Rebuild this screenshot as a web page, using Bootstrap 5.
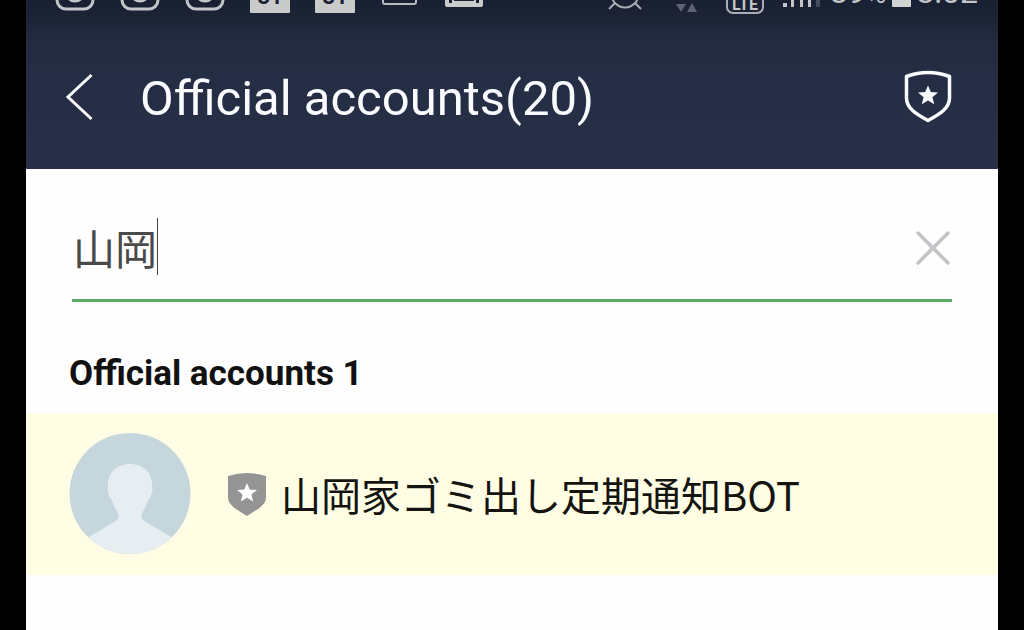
<!DOCTYPE html>
<html lang="en">
<head>
<meta charset="utf-8">
<meta name="viewport" content="width=device-width, initial-scale=1">
<title>Official accounts</title>
<link href="https://cdn.jsdelivr.net/npm/bootstrap@5.3.0/dist/css/bootstrap.min.css" rel="stylesheet">
<script src="https://cdn.jsdelivr.net/npm/bootstrap@5.3.0/dist/js/bootstrap.bundle.min.js" defer></script>
<style>
body { background: #000; font-family: Roboto, "Noto Sans CJK JP", sans-serif; overflow: hidden; }
.screen { margin: 0 26px; background: #fefefe; }
.app-top { background: linear-gradient(#1a2033 0, #1d2436 20px, #222a3e 36px, #252d44 70px, #283049 169px); }
.status { height: 24px; padding: 0 20px 0 29px; color: #c3c5c8; overflow: hidden; }
.status-icons { gap: 25px; }
.status svg { height: 40px; display: block; flex: none; }
.status-text { font-size: 32px; line-height: 32px; }
.status-text small { font-size: 28px; line-height: 1; }
.titlebar { height: 145px; padding: 0 46px 0 38px; color: #fafbff; }
.titlebar h1 { font-size: 49px; line-height: 56px; font-weight: 400; padding: 4px 0 0 46px; }
.icon-btn { padding: 0; border: 0; color: inherit; line-height: 0; }
.search { margin: 0 46px; padding: 34px 0 8px; border-bottom: 3px solid #5aa968; height: 133px; }
.search input { font-family: "Noto Sans CJK JP", sans-serif; font-size: 42px; line-height: 60px; padding: 0 1px; height: 60px; }
.search input, .search input:focus { background: transparent; box-shadow: none; color: #4a4a4a; }
.caret { left: 85px; top: 1px; width: 1px; height: 57px; background: #444; }
.section-title { font-size: 35px; line-height: 44px; font-weight: 700; color: #111; padding: 50px 43px 17px; margin: 0; }
.account { background: #fffee5; padding: 20px 43px 21px; color: #141410; }
.account-name { font-size: 40px; line-height: 60px; font-family: "Noto Sans CJK JP", sans-serif; }
</style>
</head>
<body>
<div class="screen min-vh-100">
  <header class="app-top">
    <div class="status d-flex justify-content-between align-items-end">
      <div class="status-icons d-flex">
        <svg width="40" viewBox="0 -16 40 40" fill="none" stroke="#c3c5c8" stroke-width="3"><rect x="2" y="-25" width="36" height="34" rx="9"/><circle cx="20" cy="-8" r="9"/></svg>
        <svg width="40" viewBox="0 -16 40 40" fill="none" stroke="#c3c5c8" stroke-width="3"><rect x="2" y="-25" width="36" height="34" rx="9"/><circle cx="20" cy="-8" r="9"/></svg>
        <svg width="40" viewBox="0 -16 40 40" fill="none" stroke="#c3c5c8" stroke-width="3"><rect x="2" y="-25" width="36" height="34" rx="9"/><circle cx="20" cy="-8" r="9"/></svg>
        <svg width="40" viewBox="0 -16 40 40"><rect y="-25" width="40" height="38" rx="1" fill="#c9caca"/><text x="20" y="4" text-anchor="middle" font-size="22" font-weight="700" fill="#1b2134">31</text></svg>
        <svg width="40" viewBox="0 -16 40 40"><rect y="-25" width="40" height="38" rx="1" fill="#c9caca"/><text x="20" y="4" text-anchor="middle" font-size="22" font-weight="700" fill="#1b2134">31</text></svg>
        <svg width="40" viewBox="0 -16 40 40" fill="none" stroke="#b9bbc0" stroke-width="2"><rect x="3" y="-20" width="33" height="24" rx="2"/></svg>
        <svg width="40" viewBox="0 -16 40 40"><path fill="#c9caca" d="M0-22H38V5q0 2-2 2H2Q0 7 0 5z"/><path fill="#1b2134" d="M4-1H7V3H4zM9-10H29V1H9zM31-1H34V3H31z"/></svg>
      </div>
      <div class="d-flex align-items-end">
        <svg width="34" viewBox="0 -16 34 40" fill="none" stroke="#a9acb3" stroke-width="2"><circle cx="17" cy="-6" r="13.500"/><path d="M7 3L1 9M27 3l6 6"/></svg>
        <svg class="ms-4" width="44" viewBox="-9 -16 44 40" fill="#5d6371"><path d="M1 4h10L6 12zM12 12h10L17 3z"/></svg>
        <svg class="ms-3" width="38" viewBox="0 -16 38 40"><rect x="1" y="-16" width="36" height="29" rx="6" fill="none" stroke="#aaadb4" stroke-width="2"/><text x="19" y="10" text-anchor="middle" font-size="16" font-weight="700" fill="#c3c5c8">LTE</text></svg>
        <svg class="ms-3" width="42" viewBox="-2 -16 42 40" fill="#c3c5c8"><path d="M1 3h4v4H1zM9-3h3V7H9zM18-9h3V7h-3zM26-14h3V7h-3z"/><path fill="#454c5d" d="M34-16h4V7h-4z"/></svg>
        <span class="status-text ms-2 me-1 pb-3">89<small>%</small></span>
        <svg width="22" viewBox="-1 -16 22 40" fill="#d2d3d3"><rect x="1" y="-16" width="19" height="23" rx="1"/></svg>
        <span class="status-text ms-1 pb-3">8:02</span>
      </div>
    </div>
    <div class="titlebar d-flex align-items-center">
      <button type="button" class="btn icon-btn" aria-label="Back">
        <svg width="30" height="50" viewBox="0 0 30 50" fill="none" stroke="currentColor" stroke-width="3"><path d="M27.500 3L4 25l23.500 22"/></svg>
      </button>
      <h1 class="mb-0 flex-grow-1">Official accounts(20)</h1>
      <button type="button" class="btn icon-btn" aria-label="Official accounts">
        <svg width="48" height="54" viewBox="0 0 48 54"><path d="M2.500 6.500Q13 2.500 24 2.500T45.500 6.500V28C45.500 39 34 45 24 50.500C14 45 2.500 39 2.500 28z" fill="none" stroke="currentColor" stroke-width="3.500" stroke-linejoin="round"/><path fill="currentColor" d="M24 15.500l2.800 6.600 7.200.5-5.600 4.600 1.900 7.100-6.300-3.900-6.300 3.900 1.900-7.100-5.600-4.600 7.200-.5z"/></svg>
      </button>
    </div>
  </header>
  <main>
    <div class="search d-flex align-items-center">
      <div class="position-relative flex-grow-1">
        <input class="form-control border-0 rounded-0" type="text" value="山岡" aria-label="Search accounts">
        <span class="caret position-absolute"></span>
      </div>
      <button type="button" class="btn icon-btn" aria-label="Clear search">
        <svg width="38" height="36" viewBox="0 0 38 36" fill="none" stroke="#c2c3c6" stroke-width="3.500" stroke-linecap="round"><path d="M4 4l30 30M34 4L4 34"/></svg>
      </button>
    </div>
    <h2 class="section-title">Official accounts 1</h2>
    <a href="#" class="account d-flex align-items-center text-decoration-none">
      <svg class="flex-shrink-0" width="122" height="121" viewBox="0 0 122 121"><defs><clipPath id="round"><circle cx="61" cy="60.500" r="60.500"/></clipPath></defs><g clip-path="url(#round)"><path fill="#c5d6dd" d="M0 0h122v121H0z"/><path fill="#e7eef2" d="M61 31C75 31 84 41 83 54q1 1 0 5-1 5-4 9-3 7-6 12-2 6 4 9l25 15v17H20v-17l25-15q6-3 4-9-3-5-6-12-3-4-4-9-1-4 0-5C38 41 47 31 61 31z"/></g></svg>
      <svg class="flex-shrink-0 ms-4" width="66" height="44" viewBox="-13 0 66 44"><path fill="#949494" d="M0 4Q10 1 19 1T38 4V25C38 34 28 38 19 44C10 38 0 34 0 25z"/><path fill="#fff" d="M19 11l2.700 6.500 7.300.5-5.600 4.600 1.800 7-6.200-3.800-6.200 3.800 1.800-7-5.600-4.600 7.300-.5z"/></svg>
      <span class="account-name text-nowrap">山岡家ゴミ出し定期通知BOT</span>
    </a>
  </main>
</div>
</body>
</html>
